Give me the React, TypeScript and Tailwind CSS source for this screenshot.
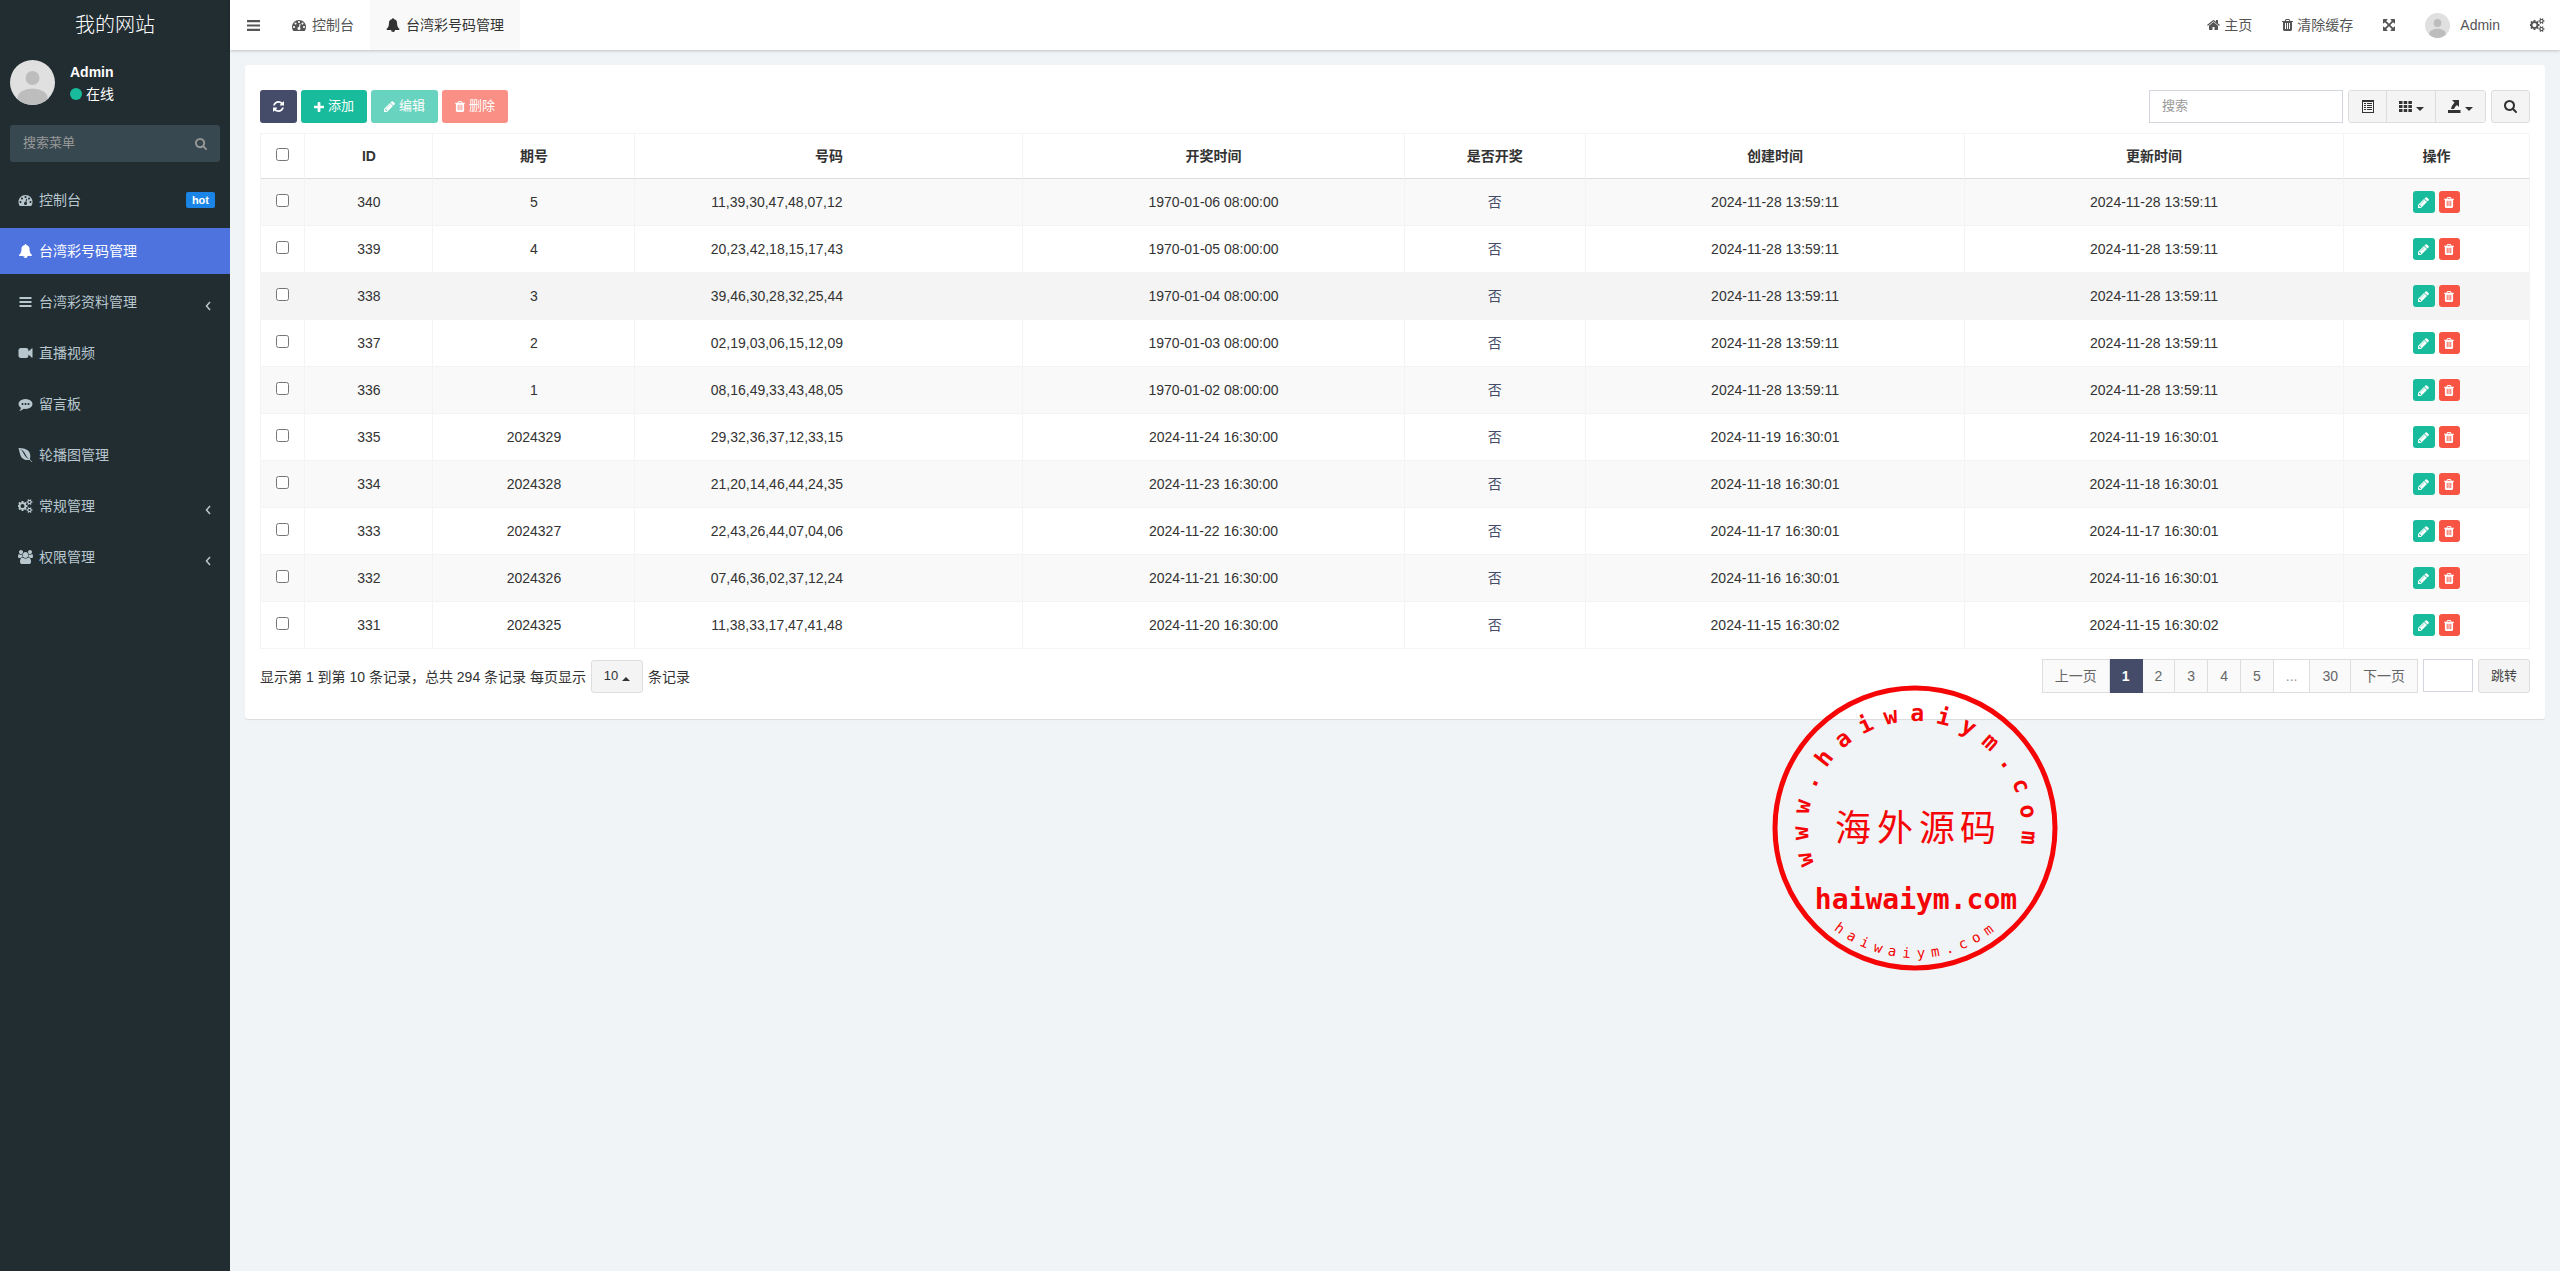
import React, { useState } from 'react'
import { FaEnvira } from 'react-icons/fa'

const paths = {
    refresh: 'M1639 1056q0 5-1 7-64 268-268 434.5t-478 166.5q-146 0-282.5-55t-243.5-157l-129 129q-19 19-45 19t-45-19-19-45v-448q0-26 19-45t45-19h448q26 0 45 19t19 45-19 45l-137 137q71 66 161 102t187 36q134 0 250-65t186-179q11-17 53-117 8-23 30-23h192q13 0 22.5 9.5t9.5 22.5zm25-800v448q0 26-19 45t-45 19h-448q-26 0-45-19t-19-45 19-45l138-138q-148-137-349-137-134 0-250 65t-186 179q-11 17-53 117-8 23-30 23h-199q-13 0-22.5-9.5t-9.5-22.5v-7q65-268 270-434.5t480-166.5q146 0 284 55.5t245 156.5l130-129q19-19 45-19t45 19 19 45z',
    trash: 'M704 1376v-704q0-14-9-23t-23-9h-64q-14 0-23 9t-9 23v704q0 14 9 23t23 9h64q14 0 23-9t9-23zm256 0v-704q0-14-9-23t-23-9h-64q-14 0-23 9t-9 23v704q0 14 9 23t23 9h64q14 0 23-9t9-23zm256 0v-704q0-14-9-23t-23-9h-64q-14 0-23 9t-9 23v704q0 14 9 23t23 9h64q14 0 23-9t9-23zm-544-992h448l-48-117q-7-9-17-11h-317q-10 2-17 11zm928 32v64q0 14-9 23t-23 9h-96v948q0 83-47 143.5t-113 60.5h-832q-66 0-113-58.5t-47-141.5v-952h-96q-14 0-23-9t-9-23v-64q0-14 9-23t23-9h309l70-167q15-37 54-63t79-26h320q40 0 79 26t54 63l70 167h309q14 0 23 9t9 23z',
    pencil: 'M491 1536l91-91-235-235-91 91v107h128v128h107zm523-928q0-22-22-22-10 0-17 7l-542 542q-7 7-7 17 0 22 22 22 10 0 17-7l542-542q7-7 7-17zm-54-192l416 416-832 832h-416v-416zm683 96q0 53-37 90l-166 166-416-416 166-165q36-38 90-38 53 0 91 38l235 234q37 39 37 91z',
    plus: 'M1600 736v192q0 40-28 68t-68 28h-416v416q0 40-28 68t-68 28h-192q-40 0-68-28t-28-68v-416h-416q-40 0-68-28t-28-68v-192q0-40 28-68t68-28h416v-416q0-40 28-68t68-28h192q40 0 68 28t28 68v416h416q40 0 68 28t28 68z',
    search: 'M1216 832q0-185-131.5-316.5t-316.5-131.5-316.5 131.5-131.5 316.5 131.5 316.5 316.5 131.5 316.5-131.5 131.5-316.5zm512 832q0 52-38 90t-90 38q-54 0-90-38l-343-342q-179 124-399 124-143 0-273.5-55.5t-225-150-150-225-55.5-273.5 55.5-273.5 150-225 225-150 273.5-55.5 273.5 55.5 225 150 150 225 55.5 273.5q0 220-124 399l343 343q37 37 37 90z',
    home: 'M1472 992v480q0 26-19 45t-45 19h-384v-384h-256v384h-384q-26 0-45-19t-19-45v-480q0-1 .5-3t.5-3l575-474 575 474q1 2 1 6zm223-69l-62 74q-8 9-21 11h-3q-13 0-21-7l-692-577-692 577q-12 8-24 7-13-2-21-11l-62-74q-8-10-7-23.5t11-21.5l719-599q32-26 76-26t76 26l244 204v-195q0-14 9-23t23-9h192q14 0 23 9t9 23v408l219 182q10 8 11 21.5t-7 23.5z',
    bell: 'M912 1696q0-16-16-16-59 0-101.5-42.5t-42.5-101.5q0-16-16-16t-16 16q0 73 51.5 124.5t124.5 51.5q16 0 16-16zm816-288q0 52-38 90t-90 38h-448q0 106-75 181t-181 75-181-75-75-181h-448q-52 0-90-38t-38-90q50-42 91-88t85-119.5 74.5-158.5 50-206 19.5-260q0-152 117-282.5t307-158.5q-8-19-8-39 0-40 28-68t68-28 68 28 28 68q0 20-8 39 190 28 307 158.5t117 282.5q0 139 19.5 260t50 206 74.5 158.5 85 119.5 91 88z',
    dashboard: 'M384 1152q0-53-37.5-90.5t-90.5-37.5-90.5 37.5-37.5 90.5 37.5 90.5 90.5 37.5 90.5-37.5 37.5-90.5zm192-448q0-53-37.5-90.5t-90.5-37.5-90.5 37.5-37.5 90.5 37.5 90.5 90.5 37.5 90.5-37.5 37.5-90.5zm428 481l101-382q6-26-7.5-48.5t-38.5-29.5-48 6.5-30 39.5l-101 382q-60 5-107 43.5t-63 98.5q-20 77 20 146t117 89 146-20 89-117q16-60-6-117t-72-91zm660-33q0-53-37.5-90.5t-90.5-37.5-90.5 37.5-37.5 90.5 37.5 90.5 90.5 37.5 90.5-37.5 37.5-90.5zm-640-640q0-53-37.5-90.5t-90.5-37.5-90.5 37.5-37.5 90.5 37.5 90.5 90.5 37.5 90.5-37.5 37.5-90.5zm448 192q0-53-37.5-90.5t-90.5-37.5-90.5 37.5-37.5 90.5 37.5 90.5 90.5 37.5 90.5-37.5 37.5-90.5zm320 448q0 261-141 483-19 29-54 29h-1402q-35 0-54-29-141-221-141-483 0-182 71-348t191-286 286-191 348-71 348 71 286 191 191 286 71 348z',
    bars: 'M128 256H1664V512H128zM128 768H1664V1024H128zM128 1280H1664V1536H128z',
    video: 'M1792 352v1088q0 42-39 59-13 5-25 5-27 0-45-19l-403-403v166q0 119-84.5 203.5t-203.5 84.5h-704q-119 0-203.5-84.5t-84.5-203.5v-704q0-119 84.5-203.5t203.5-84.5h704q119 0 203.5 84.5t84.5 203.5v165l403-402q18-19 45-19 12 0 25 5 39 17 39 59z',
    comment: 'M640 896q0-53-37.5-90.5t-90.5-37.5-90.5 37.5-37.5 90.5 37.5 90.5 90.5 37.5 90.5-37.5 37.5-90.5zm384 0q0-53-37.5-90.5t-90.5-37.5-90.5 37.5-37.5 90.5 37.5 90.5 90.5 37.5 90.5-37.5 37.5-90.5zm384 0q0-53-37.5-90.5t-90.5-37.5-90.5 37.5-37.5 90.5 37.5 90.5 90.5 37.5 90.5-37.5 37.5-90.5zm384 0q0 174-120 321.5t-326 233-450 85.5q-110 0-211-18-173 173-435 229-52 10-86 13-12 1-22-6t-13-18q-4-15 20-37 5-5 23.5-21.5t25.5-23.5 23.5-25.5 24-31.5 20.5-37 20-48 14.5-57.5 12.5-72.5q-146-90-229.5-216.5t-83.5-269.5q0-174 120-321.5t326-233 450-85.5 450 85.5 326 233 120 321.5z',
    expand: 'M1411 541l-355 355 355 355 144-144q29-31 70-14 39 17 39 59v448q0 26-19 45t-45 19h-448q-42 0-59-40-17-39 14-69l144-144-355-355-355 355 144 144q31 30 14 69-17 40-59 40h-448q-26 0-45-19t-19-45v-448q0-42 40-59 39-17 69 14l144 144 355-355-355-355-144 144q-19 19-45 19-12 0-24-5-40-17-40-59v-448q0-26 19-45t45-19h448q42 0 59 40 17 39-14 69l-144 144 355 355 355-355-144-144q-31-30-14-69 17-40 59-40h448q26 0 45 19t19 45v448q0 42-39 59-13 5-25 5-26 0-45-19z',
    cogs: 'M832 896q0-106-75-181t-181-75-181 75-75 181 75 181 181 75 181-75 75-181zm768 512q0-52-38-90t-90-38-90 38-38 90q0 53 37.5 90.5t90.5 37.5 90.5-37.5 37.5-90.5zm0-1024q0-52-38-90t-90-38-90 38-38 90q0 53 37.5 90.5t90.5 37.5 90.5-37.5 37.5-90.5zm-384 421v185q0 10-7 19.5t-16 10.5l-155 24q-11 35-32 76 34 48 90 115 7 11 7 20 0 12-7 19-23 30-82.5 89.5t-78.5 59.5q-11 0-21-7l-115-90q-37 19-77 31-11 108-23 155-7 24-30 24h-186q-11 0-20-7.5t-10-17.5l-23-153q-34-10-75-31l-118 89q-7 7-20 7-11 0-21-8-144-133-144-160 0-9 7-19 10-14 41-53t47-61q-23-44-35-82l-152-24q-10-1-17-9.5t-7-19.5v-185q0-10 7-19.5t16-10.5l155-24q11-35 32-76-34-48-90-115-7-11-7-20 0-12 7-20 22-30 82-89t79-59q11 0 21 7l115 90q34-18 77-32 11-108 23-154 7-24 30-24h186q11 0 20 7.5t10 17.5l23 153q34 10 75 31l118-89q8-7 20-7 11 0 21 8 144 133 144 160 0 8-7 19-12 16-42 54t-45 60q23 48 34 82l152 23q10 2 17 10.5t7 19.5zm640 533v140q0 16-149 31-12 27-30 52 51 113 51 138 0 4-4 7-122 71-124 71-8 0-46-47t-52-68q-20 2-30 2t-30-2q-14 21-52 68t-46 47q-2 0-124-71-4-3-4-7 0-25 51-138-18-25-30-52-149-15-149-31v-140q0-16 149-31 13-29 30-52-51-113-51-138 0-4 4-7 4-2 35-20t59-34 30-16q8 0 46 46.5t52 67.5q20-2 30-2t30 2q51-71 92-112l6-2q4 0 124 70 4 3 4 7 0 25-51 138 17 23 30 52 149 15 149 31zm0-1024v140q0 16-149 31-12 27-30 52 51 113 51 138 0 4-4 7-122 71-124 71-8 0-46-47t-52-68q-20 2-30 2t-30-2q-14 21-52 68t-46 47q-2 0-124-71-4-3-4-7 0-25 51-138-18-25-30-52-149-15-149-31v-140q0-16 149-31 13-29 30-52-51-113-51-138 0-4 4-7 4-2 35-20t59-34 30-16q8 0 46 46.5t52 67.5q20-2 30-2t30 2q51-71 92-112l6-2q4 0 124 70 4 3 4 7 0 25-51 138 17 23 30 52 149 15 149 31z',
    group: 'M593 896q-162 5-265 128h-134q-82 0-138-40.5t-56-118.5q0-353 124-353 6 0 43.5 21t97.5 42.5 119 21.5q67 0 133-23-5 37-5 66 0 139 81 256zm1071 637q0 120-73 189.5t-194 69.5h-874q-121 0-194-69.5t-73-189.5q0-53 3.5-103.5t14-109 26.5-108.5 43-97.5 62-81 85.5-53.5 111.5-20q10 0 43 21.5t73 48 107 48 135 21.5 135-21.5 107-48 73-48 43-21.5q61 0 111.5 20t85.5 53.5 62 81 43 97.5 26.5 108.5 14 109 3.5 103.5zm-1024-1277q0 106-75 181t-181 75-181-75-75-181 75-181 181-75 181 75 75 181zm704 384q0 159-112.5 271.5t-271.5 112.5-271.5-112.5-112.5-271.5 112.5-271.5 271.5-112.5 271.5 112.5 112.5 271.5zm576 225q0 78-56 118.5t-138 40.5h-134q-103-123-265-128 81-117 81-256 0-29-5-66 66 23 133 23 59 0 119-21.5t97.5-42.5 43.5-21q124 0 124 353zm-128-609q0 106-75 181t-181 75-181-75-75-181 75-181 181-75 181 75 75 181z'
}

type IconName = keyof typeof paths

// Left edge and width of the glyphs that do not fill the 1792 box
const boxes: Partial<Record<IconName, string>> = {
    refresh: '128 128 1536 1536',
    trash: '192 128 1408 1536',
    pencil: '128 128 1536 1536',
    plus: '192 128 1408 1408',
    bars: '128 128 1536 1536',
    expand: '128 128 1536 1536',
    search: '64 128 1664 1664',
    home: '64 128 1664 1536',
    cogs: '0 0 1920 1792',
    group: '0 0 1920 1792'
}

function Icon({ name, className = 'size-[14px]' }: { name: IconName; className?: string }) {
    return (
        <svg viewBox={boxes[name] ?? '0 0 1792 1792'} className={`shrink-0 ${className}`} fill="currentColor" aria-hidden="true">
            <path d={paths[name]} />
        </svg>
    )
}

function Avatar({ className }: { className: string }) {
    return (
        <svg viewBox="0 0 45 45" className={`shrink-0 rounded-full ${className}`} aria-hidden="true">
            <rect width="45" height="45" fill="#e0e0e0" />
            <circle cx="22.5" cy="18" r="7" fill="#bdbdbd" />
            <ellipse cx="22.5" cy="37.5" rx="15" ry="9" fill="#bdbdbd" />
        </svg>
    )
}

function Caret({ up = false }: { up?: boolean }) {
    return (
        <svg viewBox="0 0 8 4" className="mt-1 h-1 w-2 shrink-0" fill="currentColor" aria-hidden="true">
            <path d={up ? 'M0 4L4 0L8 4z' : 'M0 0H8L4 4z'} />
        </svg>
    )
}

const menu: { label: string; icon?: IconName; badge?: string; active?: boolean; sub?: boolean }[] = [
    { label: '控制台', icon: 'dashboard', badge: 'hot' },
    { label: '台湾彩号码管理', icon: 'bell', active: true },
    { label: '台湾彩资料管理', icon: 'bars', sub: true },
    { label: '直播视频', icon: 'video' },
    { label: '留言板', icon: 'comment' },
    { label: '轮播图管理' },
    { label: '常规管理', icon: 'cogs', sub: true },
    { label: '权限管理', icon: 'group', sub: true }
]

const columns = [
    { title: 'ID', width: 'w-[5.65%]' },
    { title: '期号', width: 'w-[8.9%]' },
    { title: '号码', width: 'w-[17.1%]' },
    { title: '开奖时间', width: 'w-[16.8%]' },
    { title: '是否开奖', width: 'w-[8%]' },
    { title: '创建时间', width: 'w-[16.7%]' },
    { title: '更新时间', width: 'w-[16.7%]' },
    { title: '操作', width: 'w-[8.2%]' }
]

const rows = [
    { id: 340, issue: '5', code: '11,39,30,47,48,07,12', open: '1970-01-06 08:00:00', time: '2024-11-28 13:59:11' },
    { id: 339, issue: '4', code: '20,23,42,18,15,17,43', open: '1970-01-05 08:00:00', time: '2024-11-28 13:59:11' },
    { id: 338, issue: '3', code: '39,46,30,28,32,25,44', open: '1970-01-04 08:00:00', time: '2024-11-28 13:59:11' },
    { id: 337, issue: '2', code: '02,19,03,06,15,12,09', open: '1970-01-03 08:00:00', time: '2024-11-28 13:59:11' },
    { id: 336, issue: '1', code: '08,16,49,33,43,48,05', open: '1970-01-02 08:00:00', time: '2024-11-28 13:59:11' },
    { id: 335, issue: '2024329', code: '29,32,36,37,12,33,15', open: '2024-11-24 16:30:00', time: '2024-11-19 16:30:01' },
    { id: 334, issue: '2024328', code: '21,20,14,46,44,24,35', open: '2024-11-23 16:30:00', time: '2024-11-18 16:30:01' },
    { id: 333, issue: '2024327', code: '22,43,26,44,07,04,06', open: '2024-11-22 16:30:00', time: '2024-11-17 16:30:01' },
    { id: 332, issue: '2024326', code: '07,46,36,02,37,12,24', open: '2024-11-21 16:30:00', time: '2024-11-16 16:30:01' },
    { id: 331, issue: '2024325', code: '11,38,33,17,47,41,48', open: '2024-11-20 16:30:00', time: '2024-11-15 16:30:02' }
]

const pages = ['上一页', '1', '2', '3', '4', '5', '...', '30', '下一页']

function Sidebar() {
    return (
        <aside className="w-[230px] shrink-0 bg-[#222d32] text-white">
            <a href="#" className="flex h-[50px] items-center justify-center text-xl font-light">我的网站</a>
            <div className="flex h-[55px] items-end gap-[15px] px-2.5">
                <Avatar className="size-[45px]" />
                <div className="leading-[22px]">
                    <p className="font-bold">Admin</p>
                    <p className="flex items-center gap-1">
                        <span className="size-3 rounded-full bg-[#18bc9c]"></span>
                        在线
                    </p>
                </div>
            </div>
            <form className="mx-2.5 mt-5 flex h-[37px] items-center rounded-[3px] bg-[#374850] px-[13px] text-[#999]">
                <input type="text" aria-label="搜索菜单" placeholder="搜索菜单" className="min-w-0 flex-1 bg-transparent text-[13px] outline-none placeholder:text-[#999]" />
                <button type="button" aria-label="搜索"><Icon name="search" className="size-3" /></button>
            </form>
            <nav className="mt-[15px] flex flex-col gap-[5px]">
                {menu.map((item) => (
                    <a
                        key={item.label}
                        href="#"
                        className={`flex h-[46px] items-center pr-[15px] pl-[18px] ${item.active ? 'bg-[#4e73df] text-white' : 'text-[#b8c7ce]'}`}
                    >
                        {!item.icon && <FaEnvira className="h-4 w-[15px] shrink-0" />}
                        {item.icon && <Icon name={item.icon} className={item.icon === 'bars' ? 'h-3 w-[15px]' : 'h-[14px] w-[15px]'} />}
                        <span className="ml-1.5 flex-1">{item.label}</span>
                        {item.badge && (
                            <span className="rounded-[2px] bg-[#1b84e7] px-1.5 text-[11px] leading-4 font-bold text-white">{item.badge}</span>
                        )}
                        {item.sub && (
                            <svg viewBox="0 0 14 14" className="mt-2 size-[14px]" fill="none" stroke="currentColor" strokeWidth="1.5" aria-hidden="true">
                                <path d="M9 3L5.500 7L9 11" />
                            </svg>
                        )}
                    </a>
                ))}
            </nav>
        </aside>
    )
}

function Header() {
    const item = 'flex h-full items-center gap-1 px-[15px]'
    return (
        <header className="relative flex h-[50px] items-center justify-between bg-white text-[#555] shadow-[0_1px_3px_rgba(0,0,0,0.2)]">
            <div className="flex h-full items-center">
                <button aria-label="菜单" className="flex h-full w-[46px] items-center justify-center"><Icon name="bars" className="size-[13px]" /></button>
                <a href="#" className="flex h-full items-center gap-1.5 px-4"><Icon name="dashboard" />控制台</a>
                <a href="#" className="flex h-full items-center gap-1.5 bg-[#f9f9f9] px-4 text-[#333]"><Icon name="bell" />台湾彩号码管理</a>
            </div>
            <div className="flex h-full items-center">
                <a href="#" className={item}><Icon name="home" className="h-3 w-[13px]" />主页</a>
                <a href="#" className={item}><Icon name="trash" className="h-3 w-[11px]" />清除缓存</a>
                <button aria-label="全屏" className={item}><Icon name="expand" className="size-3" /></button>
                <a href="#" className={item}><Avatar className="mr-1.5 size-[25px]" />Admin</a>
                <button aria-label="设置" className={item}><Icon name="cogs" className="h-[14px] w-[15px]" /></button>
            </div>
        </header>
    )
}

function Toolbar() {
    const btn = 'flex h-[33px] items-center gap-1 rounded-[3px] px-[13px] text-white'
    const tool = 'flex h-full items-center justify-center gap-1 bg-[#f4f4f4]'
    return (
        <div className="flex items-center justify-between text-[13px] text-[#333]">
            <div className="flex gap-1">
                <button aria-label="刷新" className={`${btn} bg-[#444c69]`}><Icon name="refresh" className="size-[11px]" /></button>
                <button className={`${btn} bg-[#18bc9c]`}><Icon name="plus" className="size-[10px]" />添加</button>
                <button disabled className={`${btn} bg-[#18bc9c] opacity-65`}><Icon name="pencil" className="size-[11px]" />编辑</button>
                <button disabled className={`${btn} bg-[#f75444] opacity-65`}><Icon name="trash" className="h-[11px] w-[10px]" />删除</button>
            </div>
            <div className="flex h-[33px] gap-[5px]">
                <input type="text" aria-label="搜索" placeholder="搜索" className="w-[194px] border border-[#d2d6de] px-3 placeholder:text-[#999]" />
                <div className="flex divide-x divide-[#ddd] overflow-hidden rounded-[3px] border border-[#ddd]">
                    <button aria-label="切换" className={`${tool} w-[38px]`}>
                        <svg viewBox="0 0 12 13" className="h-[13px] w-3" fill="currentColor" aria-hidden="true">
                            <path fillRule="evenodd" d="M0 0H12V13H0zM1 2V12H11V2z" />
                            <path d="M2 3H4V4H2zM5 3H10V4H5zM2 5H4V6H2zM5 5H10V6H5zM2 7H4V8H2zM5 7H10V8H5zM2 9H4V10H2zM5 9H10V10H5z" />
                        </svg>
                    </button>
                    <button aria-label="列" className={`${tool} w-[49px]`}>
                        <svg viewBox="0 0 13 13" className="size-[13px]" fill="currentColor" aria-hidden="true">
                            <path d="M0 1h3.500v3H0zM4.700 1h3.500v3H4.700zM9.400 1h3.500v3H9.400zM0 5h3.500v3H0zM4.700 5h3.500v3H4.700zM9.400 5h3.500v3H9.400zM0 9h3.500v3H0zM4.700 9h3.500v3H4.700zM9.400 9h3.500v3H9.400z" />
                        </svg>
                        <Caret />
                    </button>
                    <button aria-label="导出" className={`${tool} w-[49px]`}>
                        <svg viewBox="0 0 13 13" className="size-[13px]" fill="currentColor" aria-hidden="true">
                            <path d="M0 10h12.500v3H0zM4 0H11V7L9 5Q7 6.500 6 9H3Q3.500 5.500 6.500 2.500z" />
                        </svg>
                        <Caret />
                    </button>
                </div>
                <button aria-label="搜索" className={`${tool} w-[39px] rounded-[3px] border border-[#ddd]`}><Icon name="search" className="size-[13px]" /></button>
            </div>
        </div>
    )
}

function DataTable() {
    const cell = 'border-r border-[#f4f4f4] p-0'
    const action = 'flex h-[22px] items-center justify-center rounded-[3px]'
    return (
        <table className="mt-2.5 w-full table-fixed border-separate border-spacing-0 border-t border-l border-[#f4f4f4] text-center text-[#333]">
            <colgroup>
                <col className="w-[44px]" />
                {columns.map((col) => <col key={col.title} className={col.width} />)}
            </colgroup>
            <thead>
                <tr className="h-[45px]">
                    <th className="border-r border-b border-r-[#f4f4f4] border-b-[#ddd] p-0">
                        <input type="checkbox" aria-label="全选" className="mx-auto mb-1 block size-[13px]" />
                    </th>
                    {columns.map((col) => (
                        <th key={col.title} className="border-r border-b border-r-[#f4f4f4] border-b-[#ddd] p-0 font-bold">{col.title}</th>
                    ))}
                </tr>
            </thead>
            <tbody>
                {rows.map((row) => (
                    <tr key={row.id} className={`h-[47px] [&>td]:border-b ${row.id === 338 ? 'bg-[#f4f4f4]' : 'even:bg-white odd:bg-[#f9f9f9]'}`}>
                        <td className={cell}><input type="checkbox" aria-label={`选择 ${row.id}`} className="mx-auto mb-[3px] block size-[13px]" /></td>
                        <td className={cell}>{row.id}</td>
                        <td className={cell}>{row.issue}</td>
                        <td className="border-r border-[#f4f4f4] py-0 pr-28 pl-2">{row.code}</td>
                        <td className={cell}>{row.open}</td>
                        <td className={cell}><a href="#" className="text-[#444c69]">否</a></td>
                        <td className={cell}>{row.time}</td>
                        <td className={cell}>{row.time}</td>
                        <td className={cell}>
                            <div className="flex justify-center gap-1 text-white">
                                <button aria-label="编辑" className={`${action} w-[22px] bg-[#18bc9c]`}><Icon name="pencil" className="size-[11px]" /></button>
                                <button aria-label="删除" className={`${action} w-[21px] bg-[#f75444]`}><Icon name="trash" className="h-[11px] w-[10px]" /></button>
                            </div>
                        </td>
                    </tr>
                ))}
            </tbody>
        </table>
    )
}

function Pagination() {
    const [page, setPage] = useState('1')

    return (
        <div className="mt-2.5 flex items-start justify-between text-[#333]">
            <div className="flex items-center gap-[5px] pt-px">
                <span>显示第 1 到第 10 条记录，总共 294 条记录 每页显示</span>
                <button className="flex h-[33px] w-[52px] items-center justify-center gap-1 rounded-[3px] border border-[#ddd] bg-[#f4f4f4] text-[13px]">10 <Caret up /></button>
                <span>条记录</span>
            </div>
            <div className="flex gap-[5px] text-[#666]">
                <div className="flex border-l border-[#ddd]">
                    {pages.map((label) => (
                        <button
                            key={label}
                            onClick={() => setPage(label)}
                            className={`h-[34px] border-y border-r px-3 ${label === page ? 'border-[#444c69] bg-[#444c69] font-bold text-white' : label === '...' ? 'border-[#ddd] bg-white text-[#999]' : 'border-[#ddd] bg-[#fafafa]'}`}
                        >
                            {label}
                        </button>
                    ))}
                </div>
                <input type="text" aria-label="页码" className="h-[33px] w-[50px] border border-[#d2d6de] px-1.5" />
                <button className="h-[34px] w-[52px] rounded-[3px] border border-[#ddd] bg-[#f4f4f4] text-[13px] text-[#444]">跳转</button>
            </div>
        </div>
    )
}

// Spreads a text along a circle: one position and rotation per letter
function arc(text: string, start: number, step: number, radius: number, half: number, inside: boolean) {
    const x: number[] = []
    const y: number[] = []
    const rotate: number[] = []
    for (let i = 0; i < text.length; i++) {
        const deg = start + i * step
        const a = (deg * Math.PI) / 180
        const turn = inside ? -a : a
        const cx = 143 + radius * Math.sin(a)
        const cy = inside ? 143 + radius * Math.cos(a) : 143 - radius * Math.cos(a)
        x.push(cx - half * Math.cos(turn))
        y.push(cy - half * Math.sin(turn))
        rotate.push((turn * 180) / Math.PI)
    }
    return { x: x.join(' '), y: y.join(' '), rotate: rotate.join(' ') }
}

function Stamp() {
    return (
        <svg viewBox="0 0 286 286" className="pointer-events-none absolute top-[685px] left-[1772px] size-[286px] font-['DejaVu_Sans_Mono',monospace]" fill="#f50505">
            <circle cx="143" cy="143" r="140" fill="none" stroke="#f50505" strokeWidth="5" />
            <text {...arc('www.haiwaiym.com', -106, 13.4, 107, 7, false)} className="text-[23px] font-bold">www.haiwaiym.com</text>
            <text x="63 105 147 188" y="156" className="font-['KaiTi','Noto_Sans_CJK_SC',sans-serif] text-[36px]">海外源码</text>
            <text x="144" y="224" textAnchor="middle" className="text-[28px] font-bold">haiwaiym.com</text>
            <text {...arc('haiwaiym.com', -37, 6.6, 130, 4, true)} className="text-[14px]">haiwaiym.com</text>
        </svg>
    )
}

export default function App() {
    return (
        <div className="relative flex min-h-screen overflow-x-hidden bg-[#f0f4f7] font-['Liberation_Sans','Noto_Sans_CJK_SC',sans-serif] text-sm">
            <Sidebar />
            <div className="min-w-0 flex-1">
                <Header />
                <main className="p-[15px]">
                    <section className="rounded-[3px] bg-white px-[15px] pt-[25px] pb-[26px] shadow-[0_1px_1px_rgba(0,0,0,0.1)]">
                        <Toolbar />
                        <DataTable />
                        <Pagination />
                    </section>
                </main>
            </div>
            <Stamp />
        </div>
    )
}
